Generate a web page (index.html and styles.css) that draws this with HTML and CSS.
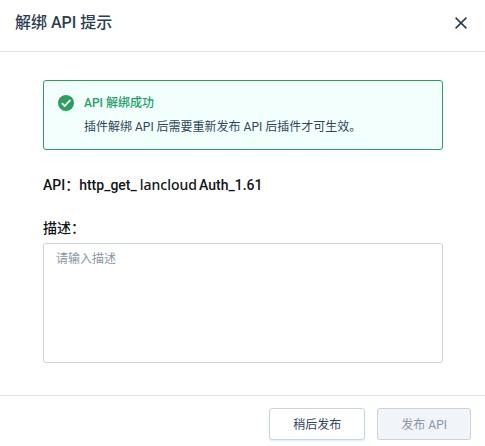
FILE: index.html
```html
<!DOCTYPE html>
<html lang="zh-CN">
<head>
<meta charset="utf-8">
<meta name="viewport" content="width=device-width, initial-scale=1">
<title>解绑 API 提示</title>
<link rel="stylesheet" href="styles.css">
</head>
<body>
<section class="dialog" role="dialog" aria-labelledby="dialog-title">
  <header class="dialog-header">
    <h1 class="dialog-title" id="dialog-title">解绑 API 提示</h1>
    <button class="close" type="button" aria-label="关闭">
      <svg viewBox="0 0 12 12" width="12" height="12" aria-hidden="true"><path d="M.6 .6 11.4 11.4M11.4 .6 .6 11.4"/></svg>
    </button>
  </header>
  <form class="dialog-form">
    <div class="dialog-body">
      <div class="alert">
        <svg class="alert-icon" viewBox="0 0 16 16" width="16" height="16" aria-hidden="true">
          <circle cx="8" cy="8" r="8"/>
          <path d="M3.8 8.2 6.7 11 12.3 5"/>
        </svg>
        <div>
          <h2 class="alert-title">API 解绑成功</h2>
          <p class="alert-text">插件解绑 API 后需要重新发布 API 后插件才可生效。</p>
        </div>
      </div>
      <p class="api-name">API：http_get_<span class="api-vendor">lancloud</span>Auth_1.61</p>
      <label class="label" for="description">描述：</label>
      <textarea class="textarea" id="description" placeholder="请输入描述"></textarea>
    </div>
    <footer class="dialog-footer">
      <button class="button" type="button">稍后发布</button>
      <button class="button" type="submit" disabled>发布 API</button>
    </footer>
  </form>
</section>
</body>
</html>
```
FILE: styles.css
```css
* {
  box-sizing: border-box;
}

body,
h1,
h2,
p {
  margin: 0;
}

body,
button,
textarea {
  font-family: Roboto, "Noto Sans CJK SC", sans-serif;
}

body {
  background: #fff;
  color: #324558;
  font-size: 12px;
  line-height: 24px;
}

.dialog-header {
  display: flex;
  align-items: center;
  justify-content: space-between;
  padding: 11px 16px 16px 15px;
  border-bottom: 1px solid #dde4ea;
}

.dialog-title {
  color: #2b3d50;
  font-size: 16px;
  font-weight: 500;
  line-height: 24px;
}

.close {
  display: flex;
  padding: 2px;
  border: 0;
  background: none;
}

.close svg {
  fill: none;
  stroke: #2b3d50;
  stroke-width: 1.6;
}

.dialog-body {
  padding: 28px 42px 32px 43px;
}

.alert {
  display: flex;
  gap: 10px;
  padding: 10px 14px;
  border: 1px solid #2c9f60;
  border-radius: 3px;
  background: #f2fffd;
}

.alert-icon {
  flex: none;
  margin-top: 4px;
  fill: #2c9f60;
}

.alert-icon path {
  fill: none;
  stroke: #fff;
  stroke-width: 1.8;
}

.alert-title {
  color: #22a068;
  font-size: 12px;
  font-weight: 500;
}

.api-name,
.label {
  color: #111418;
  font-size: 14px;
  font-weight: 500;
}

.api-name {
  margin: 23px 0 19px;
}

.api-vendor {
  margin: 0 2px 0 3px;
  font-family: "Noto Sans", sans-serif;
}

.label {
  display: block;
  margin-bottom: 3px;
}

.textarea {
  display: block;
  width: 100%;
  height: 120px;
  padding: 5px 12px;
  border: 1px solid #c9d4e0;
  border-radius: 3px;
  background: #fff;
  color: #324558;
  font-size: 12px;
  line-height: 20px;
  resize: none;
}

.textarea::placeholder {
  color: #8996a3;
}

.dialog-footer {
  display: flex;
  justify-content: flex-end;
  gap: 12px;
  padding: 12px 14px 6px;
  border-top: 1px solid #dbe4ec;
}

.button {
  height: 32px;
  padding: 0 23px 2px;
  border: 1px solid #c9d4e0;
  border-radius: 3px;
  background: #fff;
  box-shadow: 0 1px 2px #d9eff0;
  color: #324558;
  font-size: 12px;
}

.button:disabled {
  background: #f1f4f9;
  box-shadow: none;
  color: #8b97a4;
}
```
